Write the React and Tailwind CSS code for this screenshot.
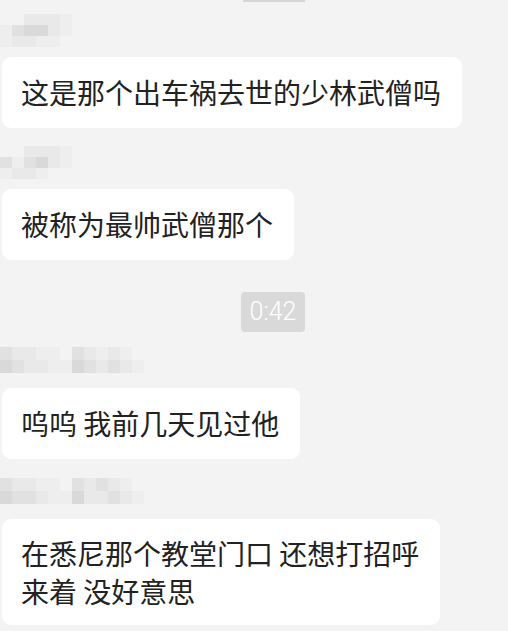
import React from "react";

const FONT = { fontFamily: '"Noto Sans CJK SC", "Noto Sans", sans-serif' };

function Mosaic({ cells, cols, cw, ch }) {
  return (
    <div className="grid" style={{ gridTemplateColumns: `repeat(${cols}, ${cw}px)`, gridAutoRows: `${ch}px` }}>
      {cells.map((c, i) => (
        <div key={i} style={{ background: c }} />
      ))}
    </div>
  );
}

function Bubble({ children, multi }) {
  return (
    <div
      className={
        multi
          ? "ml-[2px] w-fit rounded-[9px] bg-white pl-[19px] pr-[21px] pt-[15px] pb-[15px] text-[28px]/[38px] text-[#222222]"
          : "ml-[2px] w-fit rounded-[9px] bg-white pl-[19px] pr-[21px] pt-[16px] pb-[17px] text-[28px]/[38px] text-[#222222]"
      }
      style={FONT}
    >
      {children}
    </div>
  );
}

const a = "#f3f3f3";
const b = "#e9e9e9";
const c = "#e1e1e1";
const d = "#d9d9d9";
const e = "#eeeeee";

export default function App() {
  return (
    <div className="flex h-[631px] w-[508px] flex-col overflow-hidden bg-[#f3f3f3]" style={FONT}>
      <div className="ml-[243px] h-[2px] w-[62px] bg-[#d6d6d6]" />
      <div className="mt-[12px]">
        <Mosaic cols={6} cw={12} ch={11} cells={[
          a, a, b, b, b, e,
          e, c, d, d, b, e,
          e, b, b, e, e, a,
        ]} />
      </div>
      <div className="mt-[10px]">
        <Bubble>这是那个出车祸去世的少林武僧吗</Bubble>
      </div>
      <div className="mt-[18px]">
        <Mosaic cols={6} cw={12} ch={11} cells={[
          a, a, b, b, b, e,
          c, e, c, d, b, e,
          e, b, b, e, a, a,
        ]} />
      </div>
      <div className="mt-[10px]">
        <Bubble>被称为最帅武僧那个</Bubble>
      </div>
      <div className="mt-[32px] flex justify-center pl-[38px]">
        <div className="flex h-[40px] w-[64px] items-center justify-center rounded-[4px] bg-[#d9d9d9] text-[25px] font-light text-white" style={{ fontFamily: 'Roboto, "Noto Sans", sans-serif' }}>
          0:42
        </div>
      </div>
      <div className="mt-[15px]">
        <Mosaic cols={12} cw={12} ch={13} cells={[
          c, b, b, e, e, a, c, b, e, b, e, a,
          d, c, b, b, e, e, d, c, b, c, b, e,
        ]} />
      </div>
      <div className="mt-[15px]">
        <Bubble>呜呜 我前几天见过他</Bubble>
      </div>
      <div className="mt-[19px]">
        <Mosaic cols={12} cw={12} ch={13} cells={[
          c, b, b, e, e, a, c, b, c, b, e, a,
          d, c, c, b, e, e, d, b, b, c, b, e,
        ]} />
      </div>
      <div className="mt-[15px]">
        <Bubble multi>
          在悉尼那个教堂门口 还想打招呼
          <br />
          来着 没好意思
        </Bubble>
      </div>
    </div>
  );
}
